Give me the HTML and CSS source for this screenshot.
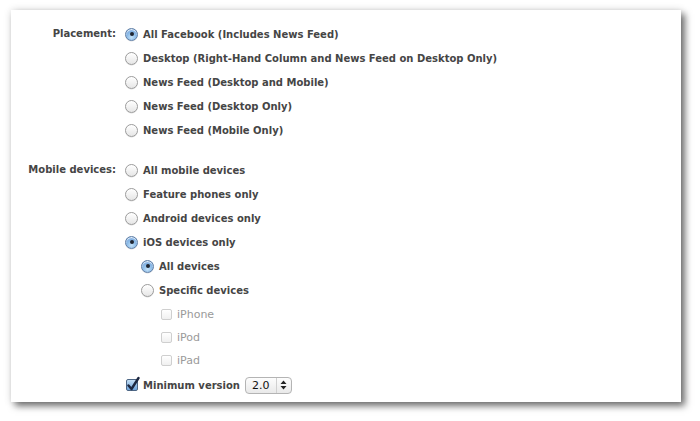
FILE: index.html
```html
<!DOCTYPE html>
<html>
<head>
<meta charset="utf-8">
<link rel="stylesheet" href="styles.css">
</head>
<body>
<div class="panel">
  <div class="section">
    <div class="label">Placement:</div>
    <div class="options">
      <div class="opt"><span class="radio on"></span><span>All Facebook (Includes News Feed)</span></div>
      <div class="opt"><span class="radio"></span><span>Desktop (Right-Hand Column and News Feed on Desktop Only)</span></div>
      <div class="opt"><span class="radio"></span><span>News Feed (Desktop and Mobile)</span></div>
      <div class="opt"><span class="radio"></span><span>News Feed (Desktop Only)</span></div>
      <div class="opt"><span class="radio"></span><span>News Feed (Mobile Only)</span></div>
    </div>
  </div>
  <div class="section second">
    <div class="label">Mobile devices:</div>
    <div class="options">
      <div class="opt"><span class="radio"></span><span>All mobile devices</span></div>
      <div class="opt"><span class="radio"></span><span>Feature phones only</span></div>
      <div class="opt"><span class="radio"></span><span>Android devices only</span></div>
      <div class="opt"><span class="radio on"></span><span>iOS devices only</span></div>
      <div class="nested">
        <div class="opt"><span class="radio on"></span><span>All devices</span></div>
        <div class="opt"><span class="radio"></span><span>Specific devices</span></div>
        <div class="devices">
          <div class="chk-row"><span class="chk"></span><span>iPhone</span></div>
          <div class="chk-row"><span class="chk"></span><span>iPod</span></div>
          <div class="chk-row"><span class="chk"></span><span>iPad</span></div>
        </div>
      </div>
      <div class="opt minver">
        <span class="chk on"><svg width="14" height="16" viewBox="0 0 14 16"><path d="M2.5 9.5 L5.5 13 L12.5 2" fill="none" stroke="#1c2740" stroke-width="2.4" stroke-linecap="round" stroke-linejoin="round"/></svg></span>
        <span>Minimum version</span>
        <span class="select"><span class="val">2.0</span><span class="arrows"><svg width="7" height="10" viewBox="0 0 7 10"><path d="M3.5 0.5 L6.5 4 L0.5 4 Z M0.5 6 L6.5 6 L3.5 9.5 Z" fill="#222"/></svg></span></span>
      </div>
    </div>
  </div>
</div>
</body>
</html>
```

FILE: styles.css
```css
html, body {
  margin: 0;
  padding: 0;
  background: #ffffff;
}
body {
  font-family: "DejaVu Sans", "Lucida Grande", sans-serif;
  font-weight: bold;
  font-size: 10px;
  color: #454545;
  min-height: 421px;
  padding-top: 10px;
  box-sizing: border-box;
}
.panel {
  margin: 0 0 0 11px;
  width: 670px;
  height: 392px;
  box-sizing: border-box;
  background: #fff;
  padding-top: 12px;
  box-shadow: 4px 4px 7px rgba(0,0,0,0.55), 0 0 8px rgba(0,0,0,0.12);
}
.section {
  display: grid;
  grid-template-columns: 105px 1fr;
  column-gap: 9px;
}
.section.second {
  margin-top: 16px;
}
.label {
  text-align: right;
  line-height: 24px;
}
.opt {
  display: flex;
  align-items: center;
  height: 24px;
  gap: 5px;
  white-space: nowrap;
}
.radio {
  width: 13px;
  height: 13px;
  box-sizing: border-box;
  border-radius: 50%;
  border: 1px solid #9c9c9c;
  background: linear-gradient(#ffffff, #e6e6e6);
  box-shadow: inset 0 1px 1px rgba(255,255,255,0.9), 0 0.5px 0.5px rgba(0,0,0,0.15);
  flex: none;
  position: relative;
}
.radio.on {
  border-color: #5f7fa6;
  background: radial-gradient(circle at 50% 75%, #c4e2f8 0%, #8cbbe8 45%, #6a9bd6 100%);
}
.radio.on::after {
  content: "";
  position: absolute;
  left: 3.5px;
  top: 3.5px;
  width: 4px;
  height: 4px;
  border-radius: 50%;
  background: #1f2530;
}
.nested {
  padding-left: 16px;
}
.devices {
  padding-left: 20px;
  padding-top: 1px;
}
.chk-row {
  display: flex;
  align-items: center;
  height: 23px;
  gap: 5px;
  color: #9a9a9a;
  font-weight: normal;
  font-size: 11px;
}
.chk {
  width: 11px;
  height: 11px;
  box-sizing: border-box;
  border: 1px solid #cfcfcf;
  border-radius: 2px;
  background: linear-gradient(#ffffff, #f0f0f0);
  flex: none;
  position: relative;
}
.minver {
  margin-top: 1px;
  gap: 5px;
}
.chk.on {
  width: 12px;
  height: 12px;
  border: 1px solid #4d6685;
  border-radius: 2px;
  background: linear-gradient(#c3def5, #6ea4dc);
  margin-left: 1px;
}
.chk.on svg {
  position: absolute;
  left: -1px;
  top: -4px;
}
.select {
  display: inline-flex;
  align-items: center;
  height: 17px;
  width: 47px;
  box-sizing: border-box;
  border: 1px solid #b4b4b4;
  border-radius: 4px;
  background: linear-gradient(#fdfdfd, #e9e9e9);
  margin-left: 0;
  font-weight: normal;
  font-size: 11px;
  color: #111;
}
.select .val {
  flex: 1;
  padding-left: 6px;
}
.select .arrows {
  width: 14px;
  height: 15px;
  border-left: 1px solid #d0d0d0;
  display: flex;
  align-items: center;
  justify-content: center;
}
```
